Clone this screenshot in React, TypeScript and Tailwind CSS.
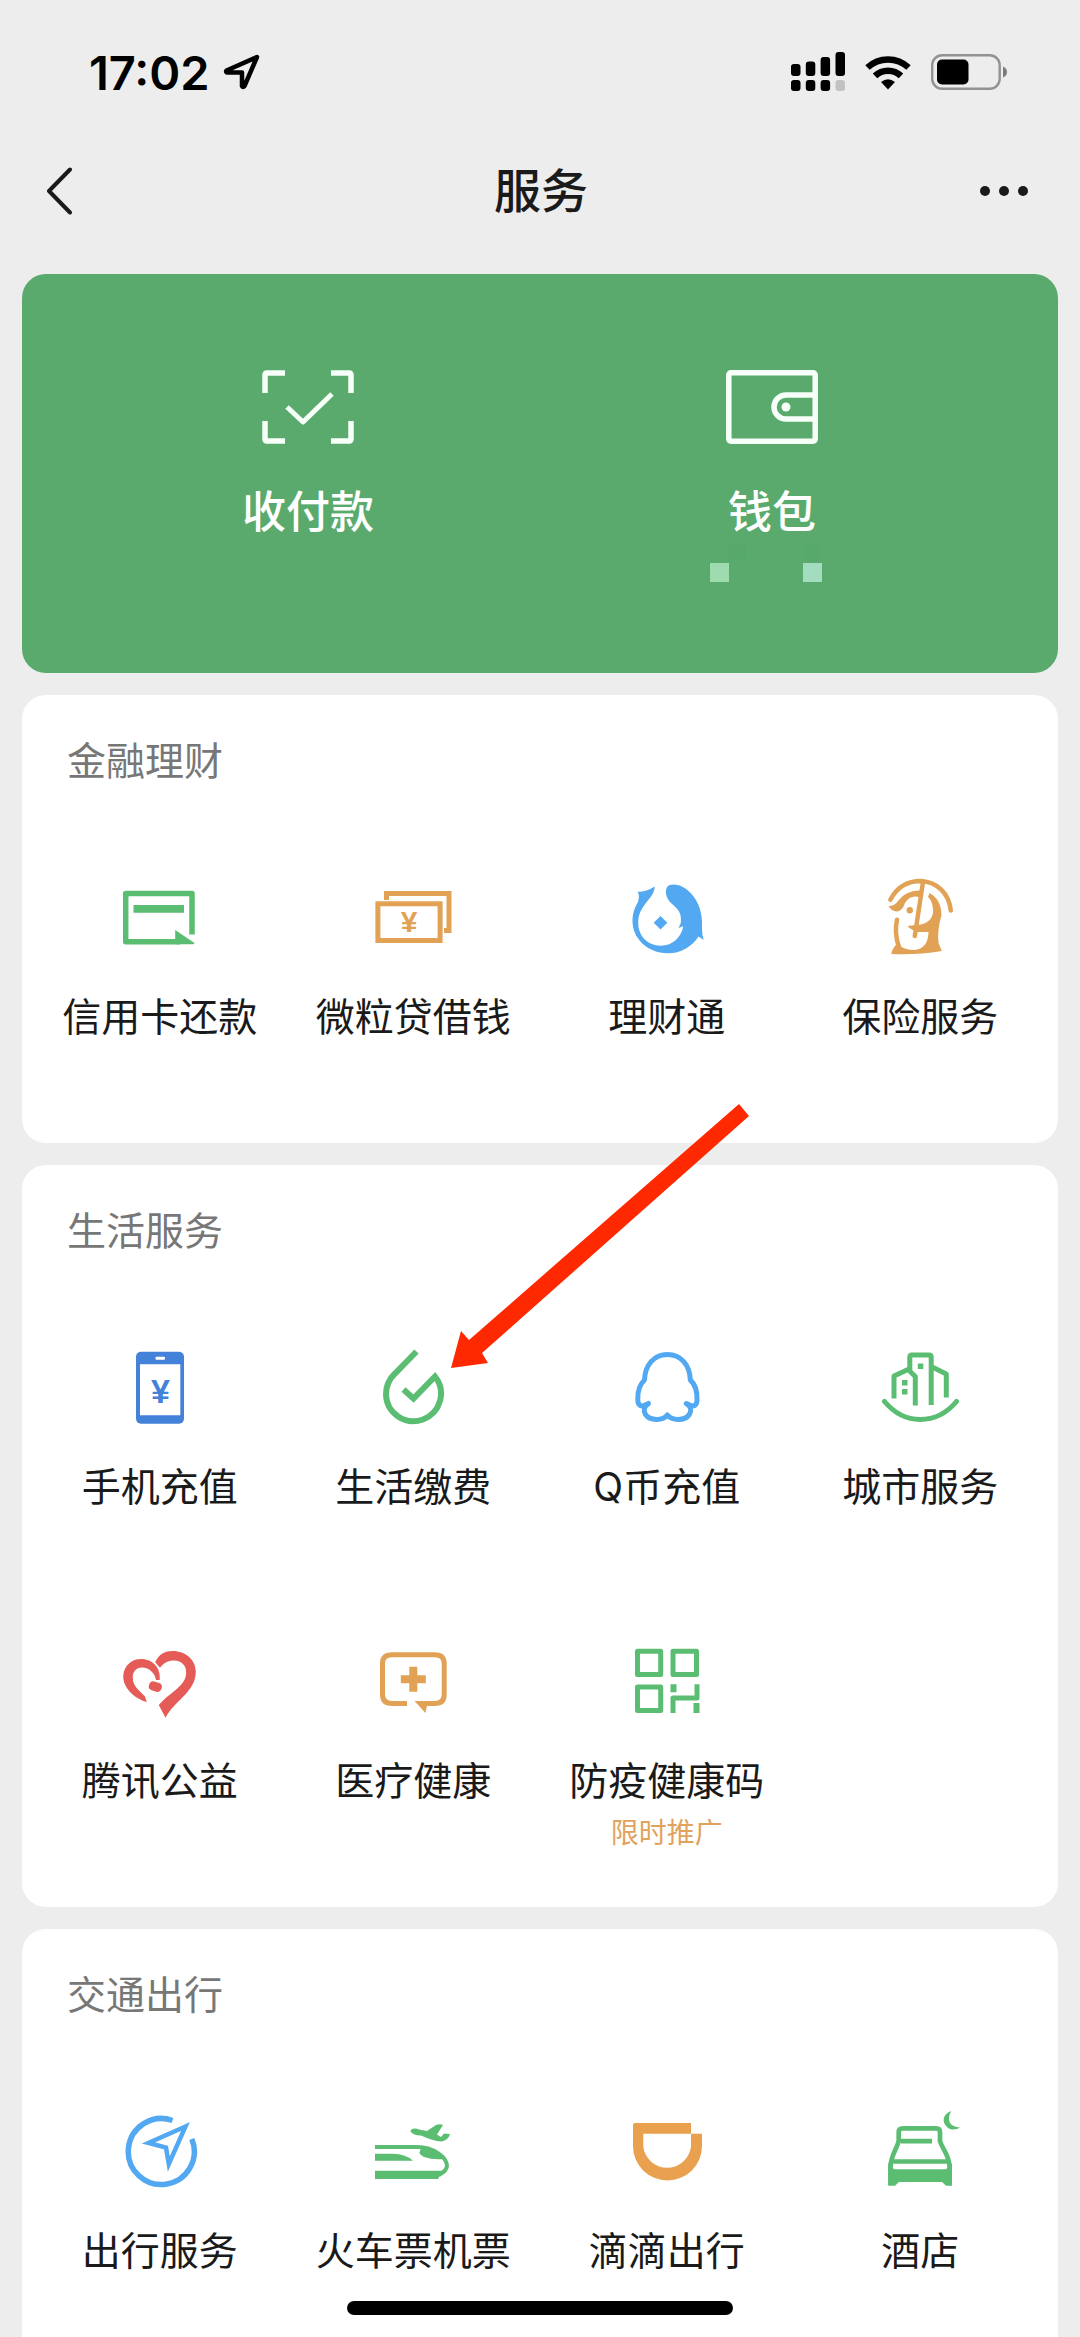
import React from 'react';

const GREEN = '#5bbd72';
const ORANGE = '#e2a255';
const BLUE = '#52a9f1';

interface Service {
  name: string;
  icon: React.ReactNode;
  note?: string;
}

interface SectionProps {
  title: string;
  services: Service[];
  children?: React.ReactNode;
}

// every service icon is drawn on an 80x80 canvas
const Icon: React.FC<{ children: React.ReactNode }> = ({ children }) => (
  <svg viewBox="0 0 80 80" className="size-20" fill="none" aria-hidden="true">
    {children}
  </svg>
);

const financeServices: Service[] = [
  {
    name: '信用卡还款',
    icon: (
      <Icon>
        <path d="M72 57.500V16.500H5.700V64.700H60" stroke={GREEN} strokeWidth="5.500" strokeLinejoin="round" />
        <path d="M13.500 28H64v7.700H13.500zM55.200 53L74.500 66Q74.500 67.300 72.500 67.300H55.200z" fill={GREEN} />
      </Icon>
    ),
  },
  {
    name: '微粒贷借钱',
    icon: (
      <Icon>
        <path d="M4.900 26.800H67.100V63.500H4.900zM13.500 23V16.500H76V53.500H71" stroke={ORANGE} strokeWidth="5" />
        <text x="36" y="55" textAnchor="middle" fill={ORANGE} className="font-['Liberation_Sans'] text-[30px] font-bold">¥</text>
      </Icon>
    ),
  },
  {
    name: '理财通',
    icon: (
      <Icon>
        <path
          d="M10.700 14.700Q19 15 27.800 9.500C27.500 21 13 27 11.300 43C10 58 20 68.700 33.800 68.700C46 68.700 54.500 60 56.200 49.300L51.500 51L53.800 46C55 36 51 32 44.500 26.500C37.500 20 37.500 11 42 8.300C49 5.500 60 10 67 20C74 30 75.500 40 75 52Q75 58 76.700 63L71.500 59.500C65 70 53 76.500 40.700 76.300C20 76 5.500 61 5.500 44C5.500 36 8 30 11 25C12 21 12.500 18 10.700 14.700Z"
          fill={BLUE}
        />
        <path d="M33.500 39l6.800 6.700l-6.800 6.700l-6.800-6.700z" fill={BLUE} />
      </Icon>
    ),
  },
  {
    name: '保险服务',
    icon: (
      <Icon>
        <path d="M10.400 22.700C17 10 28 4 41 4C57 5 69 16 70.800 33.500" stroke={ORANGE} strokeWidth="4.500" strokeLinecap="round" />
        <path d="M43 5L34.800 59" stroke={ORANGE} strokeWidth="4.500" strokeLinecap="round" />
        <path d="M8.500 29Q15 29 18 24Q26 13 40 13.500L39 20Q30 18 25 26Q22 35 16 34.500Q11 33.500 8.500 29Z" fill={ORANGE} />
        <circle cx="29.800" cy="33.300" r="3.200" fill={ORANGE} />
        <path d="M17 42.700Q14 56 19 70" stroke={ORANGE} strokeWidth="4.500" strokeLinecap="round" />
        <path
          d="M49.500 16Q61 22 61.500 38Q57 54 58.500 66L61.800 74Q38 78 11.500 77Q11 73 17.500 66Q22 73 34 73Q48 72 48.500 55H38Q31 53 27.500 49L41 47.500Q54 44 53 32Q52 23 48 20Z"
          fill={ORANGE}
        />
      </Icon>
    ),
  },
];

const lifeServices: Service[] = [
  {
    name: '手机充值',
    icon: (
      <Icon>
        <rect x="16" y="4.700" width="48" height="72" rx="5" fill="#4482da" />
        <path d="M20 17.300H60.300V68.300H20z" fill="white" />
        <rect x="35.500" y="9.700" width="9.500" height="3" rx="1" fill="white" />
        <text x="40.500" y="56" textAnchor="middle" fill="#4482da" className="font-['Liberation_Sans'] text-[34px] font-bold">¥</text>
      </Icon>
    ),
  },
  {
    name: '生活缴费',
    icon: (
      <Icon>
        <path d="M43.500 4.500L22 26.500C15 33 13 40 13 47.500A27.500 27.500 0 1 0 62 29.500L40.500 51.500L30.500 42.500" stroke={GREEN} strokeWidth="6" />
      </Icon>
    ),
  },
  {
    name: 'Q币充值',
    icon: (
      <Icon>
        <path
          d="M40.400 7.500C27 7.500 18 18 17.500 33C12 38 10.500 46 10.800 53C11 59 14 61 21.500 56.500C17 60 16 63 18.500 67.500C23 74 36 74 40.400 68C45 74 58 74 62.300 67.500C65 63 64 60 59.300 56.500C67 61 69.800 59 70 53C70.300 46 69 38 63.300 33C62.800 18 54 7.500 40.400 7.500Z"
          stroke={BLUE}
          strokeWidth="5"
          strokeLinejoin="round"
        />
      </Icon>
    ),
  },
  {
    name: '城市服务',
    icon: (
      <Icon>
        <g stroke={GREEN} strokeWidth="5">
          <path d="M4.500 54.500C15 67 27 72.500 40.300 72.500S66 67 76.500 54.500" strokeLinecap="round" />
          <path d="M14 51.500V29L28 22.500L35.300 29.500V58.500" strokeLinejoin="round" />
          <path d="M29.800 23V10Q29.800 8 32 8H49Q51.200 8 51.200 10V58M51.200 19.500L66.300 27V50.500" strokeLinejoin="round" />
        </g>
        <path d="M37.800 16.500h5.500v5.500h-5.500zM22 33h5.500v5.500H22zM22 42h5.500v5.500H22z" fill={GREEN} />
      </Icon>
    ),
  },
  {
    name: '腾讯公益',
    icon: (
      <Icon>
        <g fill="#e45b58">
          <path d="M26.800 61C13 57 3 46 3.200 35C4 24 12 18 21 18C33 18 41 27 39.700 39H36C35 32 29 26.500 22 26.500C16 26.500 12.500 31 12.800 37C13 46 20 50 25 55.500Z" />
          <path d="M35.200 21.300C39 13 45 10 52.400 10C66 10 75.800 19 75.800 31C75.500 51 55 59 45.500 76.700L38.800 64C50 51 66.500 45 66.200 31C66 24 61 19.500 54 19.500C48 19.500 44 22 40 26.700Z" />
          <rect x="29" y="41" width="13" height="9" rx="4" transform="rotate(18 35 45)" />
        </g>
      </Icon>
    ),
  },
  {
    name: '医疗健康',
    icon: (
      <Icon>
        <path d="M34 62.500H19Q9.500 62.500 9.500 53.500V22.500Q9.500 13.800 19 13.800H62Q71.200 13.800 71.200 22.500V53.500Q71.200 62.500 62 62.500H48" stroke={ORANGE} strokeWidth="5" />
        <path d="M41.500 60H55L52.400 72zM36.300 25.800h8v8.500h8.500v8h-8.500v8.500h-8v-8.500h-8.500v-8h8.500z" fill={ORANGE} />
      </Icon>
    ),
  },
  {
    name: '防疫健康码',
    note: '限时推广',
    icon: (
      <Icon>
        <path d="M10.500 10.200h23.200v23.300H10.500zM46 10.200h23.500v23.300H46zM10.500 46h23.200v23.500H10.500zM46 72V57H70V43.300" stroke={GREEN} strokeWidth="5" strokeLinejoin="round" />
        <path d="M43.500 43.300h6v8h-6zM66.500 62h6v10h-6z" fill={GREEN} />
      </Icon>
    ),
  },
];

const travelServices: Service[] = [
  {
    name: '出行服务',
    icon: (
      <Icon>
        <path d="M52.500 9.500A33 33 0 1 0 71.800 28" stroke={BLUE} strokeWidth="5.500" />
        <path d="M65.500 15.500L28.500 32L46 36.500L48.800 53Z" stroke={BLUE} strokeWidth="4.500" />
      </Icon>
    ),
  },
  {
    name: '火车票机票',
    icon: (
      <Icon>
        <path d="M2 36H44C60 36 74 46 74 55Q73.500 60 66 64" stroke={GREEN} strokeWidth="4" />
        <path
          d="M2 59.700H70L65 68H2zM2 42.700H20Q33 43 40 49.700H2zM49 37Q64 39 70 48Q60 49 51 46Q43 42 49 37ZM37.200 20Q40 16 46 18.500L54 20L63 14Q67 12.500 70 14L64 23.500L68 26L71 22.500L77 23Q75 30 68 30.500Q60 30 48 24.500Q40 24.500 37.200 20Z"
          fill={GREEN}
        />
      </Icon>
    ),
  },
  {
    name: '滴滴出行',
    icon: (
      <Icon>
        <path d="M6 14Q6 12 8 12H64V22.700H16.300V35.500A24 24 0 0 0 64 35.500V22.700H75V35A34.500 34.500 0 0 1 6 35Z" fill="#e9a150" />
      </Icon>
    ),
  },
  {
    name: '酒店',
    icon: (
      <Icon>
        <path d="M18.700 31V21Q18.700 17.300 23 17.300H56Q60 17.300 60 21V31M18.700 30C17 38 11 43 10.500 56V74M60 30C62 38 69 43 69.600 56V74M21 30.200H52M12 50.500H68" stroke={GREEN} strokeWidth="4.700" />
        <path d="M8.300 52L14 58.300H66L72 52V74.700H66L62 71H19L15 74.700H8.300ZM71.300 0C66 9 70 16 80 16.300C77 19 71 19.500 67.500 16.500C61 11 63 3 71.300 0Z" fill={GREEN} />
      </Icon>
    ),
  },
];

const Section: React.FC<SectionProps> = ({ title, services, children }) => (
  <section className="relative shrink-0 rounded-3xl bg-white px-[11px] pt-10 pb-14">
    <h2 className="px-[34px] text-[39px] leading-[52px] text-[#777777]">{title}</h2>
    <div className="mt-[90px] grid grid-cols-4 gap-y-[84px]">
      {services.map((service) => (
        <button key={service.name} type="button" className="flex flex-col items-center">
          {service.icon}
          <span className="mt-[34px] text-[39px] leading-[52px] whitespace-nowrap text-[#1a1a1a]">{service.name}</span>
          <span className="mt-2 h-9 text-[28px] leading-9 text-[#e0a25c]">{service.note}</span>
        </button>
      ))}
    </div>
    {children}
  </section>
);

const StatusBar: React.FC = () => (
  <div className="flex h-36 shrink-0 items-center justify-between pr-[73px] pl-[89px]">
    <div className="flex items-center gap-3">
      <span className="text-[47px] leading-none font-semibold text-black">17:02</span>
      <svg viewBox="0 0 38 38" className="size-[38px]" fill="none" aria-hidden="true">
        <path d="M35 4L4.500 17.500Q3.500 19 5 19.500H20V33Q21 35 22.500 33Z" stroke="black" strokeWidth="4.500" strokeLinejoin="round" />
      </svg>
    </div>
    <div className="flex items-center gap-5">
      <svg viewBox="0 0 54 40" className="h-10 w-[54px]" aria-hidden="true">
        <rect x="0" y="12" width="9.500" height="12" rx="3" />
        <rect x="14.800" y="9.500" width="9.500" height="14.500" rx="3" />
        <rect x="29.600" y="5" width="9.500" height="19" rx="3" />
        <rect x="44.500" y="0" width="9.500" height="24" rx="3" />
        <rect x="0" y="28" width="9.500" height="11" rx="3" />
        <rect x="14.800" y="28" width="9.500" height="11" rx="3" />
        <rect x="29.600" y="28" width="9.500" height="11" rx="3" />
        <rect x="44.500" y="28" width="9.500" height="11" rx="3" fill="#c2c2c2" />
      </svg>
      <svg viewBox="0 0 46 36" className="h-9 w-[46px]" fill="none" aria-hidden="true">
        <path d="M2.500 13.500A30 30 0 0 1 43.500 13.500M10 21.800A19 19 0 0 1 36 21.800" stroke="black" strokeWidth="6.500" />
        <path d="M16 28Q23 22.500 30 28L23 35.500Z" fill="black" />
      </svg>
      <svg viewBox="0 0 76 36" className="h-9 w-[76px]" aria-hidden="true">
        <rect x="1.200" y="1.200" width="67.500" height="33.600" rx="10" fill="none" stroke="#929292" strokeWidth="2.400" />
        <rect x="6" y="5.500" width="31.500" height="25" rx="5" />
        <path d="M72 12.500Q76 14 76 18T72 23.500Z" fill="#7d7d7d" />
      </svg>
    </div>
  </div>
);

export default function App() {
  return (
    <main className="relative flex h-screen flex-col overflow-hidden bg-[#ededed] font-['Inter','Noto_Sans_CJK_SC',sans-serif]">
      <StatusBar />
      <header className="flex h-[94px] shrink-0 items-center justify-between pr-[52px] pl-[46px]">
        <button type="button" aria-label="返回" className="w-14">
          <svg viewBox="0 0 26 48" className="h-12 w-[26px]" fill="none" aria-hidden="true">
            <path d="M24 2.500L3 24L24 45.500" stroke="#1a1a1a" strokeWidth="4" strokeLinecap="round" strokeLinejoin="round" />
          </svg>
        </button>
        <h1 className="text-[47px] leading-[60px] font-medium text-[#1a1a1a]">服务</h1>
        <button type="button" aria-label="更多" className="flex gap-[9px]">
          <span className="size-[10px] rounded-full bg-[#1a1a1a]" />
          <span className="size-[10px] rounded-full bg-[#1a1a1a]" />
          <span className="size-[10px] rounded-full bg-[#1a1a1a]" />
        </button>
      </header>

      <div className="flex flex-col gap-[22px] px-[22px] pt-9">
        <section className="grid shrink-0 grid-cols-2 rounded-3xl bg-[#5aaa6d] px-[54px] pt-24 pb-[91px]">
          <button type="button" className="flex flex-col items-center">
            <svg viewBox="0 0 92 74" className="h-[74px] w-[92px]" fill="none" stroke="#f6fff8" strokeWidth="5.500" aria-hidden="true">
              <path d="M3 23V5Q3 3 5 3H23M69 3H87Q89 3 89 5V23M89 51V69Q89 71 87 71H69M23 71H5Q3 71 3 69V51" />
              <path d="M25 37L41 52L70 24" strokeWidth="5" strokeLinejoin="round" />
            </svg>
            <span className="mt-[38px] text-[44px] leading-[60px] font-medium text-white">收付款</span>
          </button>
          <button type="button" className="flex flex-col items-center">
            <svg viewBox="0 0 92 74" className="h-[74px] w-[92px]" fill="none" stroke="#f6fff8" strokeWidth="5.500" aria-hidden="true">
              <rect x="2.800" y="2.800" width="86.400" height="68.400" rx="2" />
              <path d="M88 25H60A12 12 0 0 0 60 49H88" />
              <circle cx="60" cy="37" r="4.500" fill="#f6fff8" stroke="none" />
            </svg>
            <span className="mt-[38px] text-[44px] leading-[60px] font-medium text-white">钱包</span>
            {/* hidden balance */}
            <svg viewBox="0 0 124 40" className="h-10 w-[124px]" aria-hidden="true">
              <rect x="18" y="3" width="18" height="16" fill="#56a96a" />
              <rect x="93" y="3" width="18" height="16" fill="#56a96a" />
              <rect x="0" y="21" width="19" height="19" fill="#9edbae" />
              <rect x="93" y="21" width="19" height="19" fill="#a4dcc0" />
            </svg>
          </button>
        </section>

        <Section title="金融理财" services={financeServices} />
        <Section title="生活服务" services={lifeServices}>
          <svg viewBox="0 0 300 268" className="absolute -top-16 left-[428px] z-10 h-[268px] w-[300px]" aria-hidden="true">
            <path d="M289 3L299 15L32 252L38 262L1 267L11 230L19 239Z" fill="#fe2801" />
          </svg>
        </Section>
        <Section title="交通出行" services={travelServices} />
      </div>

      <div className="absolute bottom-[22px] left-1/2 h-[14px] w-[386px] -translate-x-1/2 rounded-full bg-black" />
    </main>
  );
}
